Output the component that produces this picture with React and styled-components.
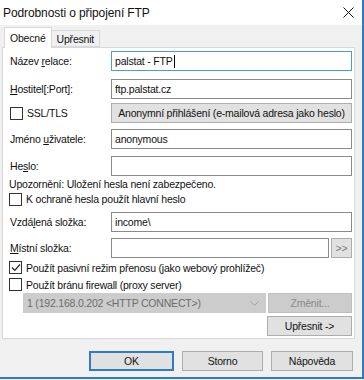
import React from 'react';
import styled, { createGlobalStyle } from 'styled-components';

const GlobalStyle = createGlobalStyle`
  html, body { margin: 0; padding: 0; background: #f0f0f0; }
  body {
    font-family: "Liberation Sans", Arial, sans-serif;
    font-size: 10.5px;
    letter-spacing: -0.2px;
    color: #111;
  }
`;

const Window = styled.div`
  width: 362px;
  height: 377px;
  background: #f0f0f0;
  border-right: 2px solid #2f7cc4;
  border-bottom: 2px solid #2f7cc4;
  display: flex;
  flex-direction: column;
  overflow: hidden;
`;

const TitleBar = styled.div`
  height: 25px;
  flex: none;
  background: #fff;
  display: flex;
  align-items: center;
  justify-content: space-between;
  padding: 0 8px 0 3px;
  font-size: 12px;
  letter-spacing: -0.1px;
`;

const Body = styled.div`
  padding: 1px 7px 0 2px;
  display: flex;
  flex-direction: column;
`;

const TabStrip = styled.div`
  display: flex;
  align-items: flex-end;
  height: 21px;
  flex: none;
  padding-left: 2px;
`;

const Tab = styled.div`
  height: ${p => (p.$active ? '21px' : '17px')};
  padding: 0 5px;
  margin-bottom: ${p => (p.$active ? '-1px' : '0')};
  background: ${p => (p.$active ? '#fff' : '#f0f0f0')};
  border: 1px solid #d9d9d9;
  border-bottom: ${p => (p.$active ? 'none' : '1px solid #d9d9d9')};
  border-left: ${p => (p.$active ? '1px solid #d9d9d9' : 'none')};
  display: flex;
  align-items: center;
  box-sizing: border-box;
  position: relative;
  z-index: ${p => (p.$active ? 1 : 0)};
`;

const Panel = styled.div`
  height: 292px;
  box-sizing: border-box;
  flex: none;
  background: #fff;
  border: 1px solid #d9d9d9;
  padding: 3px 2px 0 6px;
  display: flex;
  flex-direction: column;
`;

const Row = styled.div`
  display: flex;
  align-items: center;
  flex: none;
  margin-top: ${p => p.$mt || 0}px;
  padding-left: ${p => p.$indent || 0}px;
  height: ${p => p.$h || 20}px;
  white-space: pre;
`;

const Label = styled.div`
  width: 101px;
  flex: none;
  padding-left: 1px;
  white-space: pre;
`;

const CheckLabel = styled(Label)`
  display: flex;
  align-items: center;
`;

const Input = styled.div`
  flex: 1;
  height: 20px;
  box-sizing: border-box;
  border: 1px solid ${p => (p.$focused ? '#4a9bd9' : '#8a8a8a')};
  background: #fff;
  display: flex;
  align-items: center;
  padding-left: 3px;
  white-space: pre;
`;

const Caret = styled.span`
  display: inline-block;
  width: 1px;
  height: 13px;
  background: #000;
  margin-left: 1px;
`;

const Button = styled.div`
  height: 20px;
  box-sizing: border-box;
  width: ${p => (p.$w ? `${p.$w}px` : 'auto')};
  flex: ${p => (p.$w ? 'none' : '1')};
  background: ${p => (p.$disabled ? '#cccccc' : '#e1e1e1')};
  border: ${p => (p.$default ? '2px solid #2f7cc4' : `1px solid ${p.$disabled ? '#bfbfbf' : '#adadad'}`)};
  color: ${p => p.$color || (p.$disabled ? '#8a8a8a' : '#111')};
  display: flex;
  align-items: center;
  justify-content: center;
  white-space: nowrap;
  margin-left: ${p => p.$ml || 0}px;
`;

const Box = styled.span`
  width: 11px;
  height: 11px;
  border: 1px solid #333;
  background: #fff;
  flex: none;
  margin-right: 4px;
  display: flex;
  align-items: center;
  justify-content: center;
`;

const Select = styled.div`
  width: 243px;
  height: 20px;
  box-sizing: border-box;
  background: #cccccc;
  border: 1px solid #cccccc;
  color: #6d6d6d;
  display: flex;
  align-items: center;
  justify-content: space-between;
  padding: 0 6px 0 3px;
`;

const Spacer = styled.div`
  flex: 1;
`;

const Footer = styled.div`
  display: flex;
  padding: 12px 0 0 87px;
  gap: 8px;
`;

const U = styled.span`
  text-decoration: underline;
`;

function Check({ checked }) {
  return (
    <Box>
      {checked && (
        <svg width="10" height="9" viewBox="0 0 10 9">
          <path d="M1 4.5 L3.8 7.3 L9 1.5" fill="none" stroke="#222" strokeWidth="1.2" />
        </svg>
      )}
    </Box>
  );
}

function App() {
  return (
    <>
      <GlobalStyle />
      <Window>
        <TitleBar>
          <span>Podrobnosti o připojení FTP</span>
          <svg width="11" height="11" viewBox="0 0 11 11">
            <path d="M0.5 0.5 L10.5 10.5 M10.5 0.5 L0.5 10.5" stroke="#111" strokeWidth="1" />
          </svg>
        </TitleBar>
        <Body>
          <TabStrip>
            <Tab $active>Obecné</Tab>
            <Tab>Upřesnit</Tab>
          </TabStrip>
          <Panel>
            <Row>
              <Label>Název <U>r</U>elace:</Label>
              <Input $focused>palstat - FTP<Caret /></Input>
            </Row>
            <Row $mt={8}>
              <Label><U>H</U>ostitel[:Port]:</Label>
              <Input>ftp.palstat.cz</Input>
            </Row>
            <Row $mt={4}>
              <CheckLabel>
                <Check />SSL/TLS
              </CheckLabel>
              <Button>Anonymní přihlášení (e-mailová adresa jako heslo)</Button>
            </Row>
            <Row $mt={6}>
              <Label>Jméno <U>u</U>živatele:</Label>
              <Input>anonymous</Input>
            </Row>
            <Row $mt={7}>
              <Label>He<U>s</U>lo:</Label>
              <Input />
            </Row>
            <Row $h={15}>
              <span>Upozornění: Uložení hesla není zabezpečeno.</span>
            </Row>
            <Row $h={16}>
              <Check />K ochraně hesla použít hlavní heslo
            </Row>
            <Row $mt={5}>
              <Label>Vzdá<U>l</U>ená složka:</Label>
              <Input>income\</Input>
            </Row>
            <Row $mt={6}>
              <Label><U>M</U>ístní složka:</Label>
              <Input />
              <Button $w={21} $ml={2} $color="#777">&gt;&gt;</Button>
            </Row>
            <Row $h={17} $mt={1}>
              <Check checked />Použít pasivní režim přenosu (jako webový prohlížeč)
            </Row>
            <Row $h={17}>
              <Check />Použít bránu firewall (proxy server)
            </Row>
            <Row $indent={14}>
              <Select>
                <span>1 (192.168.0.202 &lt;HTTP CONNECT&gt;)</span>
                <svg width="9" height="5" viewBox="0 0 9 5">
                  <path d="M0.5 0.5 L4.5 4.5 L8.5 0.5" fill="none" stroke="#a0a0a0" strokeWidth="1" />
                </svg>
              </Select>
              <Button $ml={2} $disabled>Změnit...</Button>
            </Row>
            <Row $mt={3}>
              <Spacer />
              <Button $w={85}>Upřesnit -&gt;</Button>
            </Row>
          </Panel>
          <Footer>
            <Button $w={85} $default>OK</Button>
            <Button $w={81}>Storno</Button>
            <Button $w={82}>Nápověda</Button>
          </Footer>
        </Body>
      </Window>
    </>
  );
}

export default App;
